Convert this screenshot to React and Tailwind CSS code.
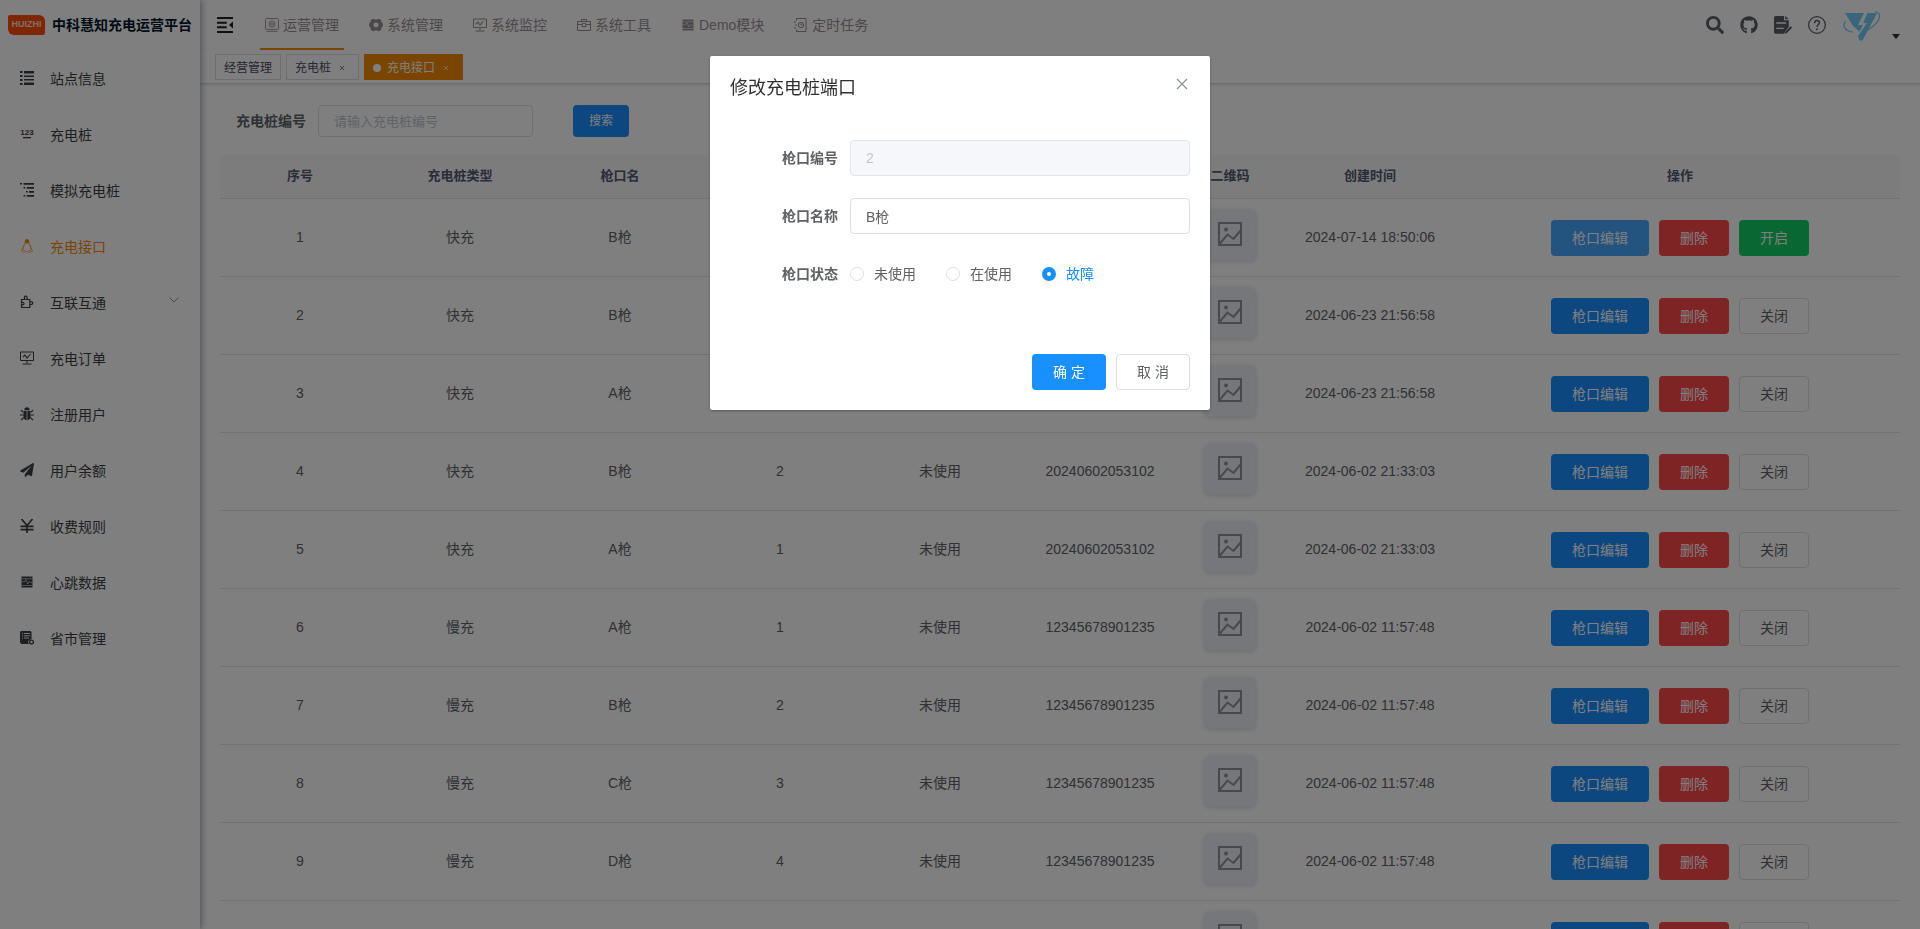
import { useState } from 'react'
import { FaSearch, FaGithub, FaPaperPlane } from 'react-icons/fa'

function Icon({ name, className }) {
  return (
    <svg viewBox="0 0 14 14" className={className} fill="currentColor" aria-hidden="true">
      {ICONS[name]}
    </svg>
  )
}

const line = { fill: 'none', stroke: 'currentColor' }

const ICONS = {
  list: (
    <path d="M0 0h2.5v2H0zM4 0h10v2.5H4zM0 4h2.5v2H0zM4 4.5h10v1.500H4zM0 8h2.5v2H0zM4 8h10v1.500H4zM0 12h2.5v2H0zM4 11.5h10V14H4z" />
  ),
  number: (
    <>
      <text x="7" y="7.500" textAnchor="middle" className="font-['Liberation_Sans'] text-[8px] font-bold">123</text>
      <path d="M3 10h8v1.300H3z" />
    </>
  ),
  tree: (
    <path d="M0 0h2v1.6H0zM3.5 0H14v1.8H3.5zM3.5 4h1.8v1.6H3.5zM6.8 4H14v1.8H6.8zM6 8h1.8v1.6H6zM9 8h5v1.8H9zM3.5 12h1.8v1.6H3.5zM6.8 12H14v1.8H6.8z" />
  ),
  penguin: (
    <g {...line} strokeWidth="1">
      <path d="M5.200 4.200C5 1.500 5.600.5 7 .5s2 1 1.800 3.700c.4 1.500 2.600 3.600 2.600 6.200M5.200 4.200C4.800 5.700 2.700 7.800 2.600 10.400" />
      <path fill="currentColor" d="M5.500 1.500C5.700.2 8.300.2 8.500 1.500V3.800H5.500z" />
      <path d="M2.600 10.200L1.200 12l3.200 1.500 1-1.300zM11.400 10.200L12.800 12l-3.200 1.500-1-1.300zM5.200 12.700h3.600" opacity="0.6" />
    </g>
  ),
  puzzle: (
    <path {...line} strokeWidth="1.200" d="M1.500 4.500H5C3.700 2.500 4.500 1.200 5.700 1.200S7.700 2.500 6.600 4.500h3.200v2.800c1.500-1 3-.5 3 .8s-1.500 1.800-3 .8v3.600H1.500V9.400c1.500.8 2.500.2 2.500-.8s-1-1.700-2.500-.9z" />
  ),
  monitor: (
    <g {...line}>
      <path d="M.5 1h13v8.500H.5zM7 9.500v3M2.500 13h9" />
      <path d="M3 6l2-2 2 3 3.500-4" strokeWidth="1.100" />
    </g>
  ),
  bug: (
    <>
      <path d="M4.300 3.200C4.300 1 5.500.3 7 .3s2.700.7 2.700 2.900zM3.800 4h2.800v9.300C4.500 13 3.400 11 3.400 8.500zM7.400 4h2.800l.4 4.500c0 2.500-1.100 4.500-3.200 4.800z" />
      <path {...line} strokeWidth="1.200" d="M.8 3.200l2.700 2M13.200 3.200l-2.700 2M0 8h3.500M14 8h-3.500M1 13.200l2.700-2.700M13 13.200l-2.700-2.700" />
    </>
  ),
  yen: (
    <path {...line} strokeWidth="1.700" d="M1.500 0L7 6.500 12.500 0M7 6.500V14M.5 7.300h13M.5 10.700h13" />
  ),
  pulse: (
    <>
      <path d="M1.500 1.500h11v11h-11z" />
      <path fill="none" className="stroke-white" strokeWidth="0.900" d="M1.500 6.800h3l1.500-2.300L7.700 9l1.600-2.600 1 1h2.200M1.500 3.700h11M1.500 10.500h11" opacity="0.600" />
    </>
  ),
  form: (
    <>
      <path d="M1 0h9.500l1 1v7.200a3 3 0 00-2.700 4.800H1.500L0 11.500V1z" />
      <path fill="none" className="stroke-white" strokeWidth="0.900" d="M2 2.500h1M4 2.500h6M2 4.800h1M4 4.800h6M2 7h1M4 7h5" />
      <circle {...line} strokeWidth="1.300" cx="11.500" cy="11" r="1.900" />
    </>
  ),
  dashboard: (
    <g {...line} strokeWidth="0.900">
      <rect x="0.500" y="0.500" width="13" height="11" rx="0.800" />
      <path d="M1.500 13.400h11M7 2.500l3 1.700v3.600L7 9.500 4 7.800V4.200z" />
      <circle cx="7" cy="6" r="1.400" />
    </g>
  ),
  gear: (
    <path
      fillRule="evenodd"
      d="M4.200.8l1.600.6h2.400L9.800.8l2.200 1.300.4 1.700L13.800 5.700v2.600l-1.400 1.900-.4 1.700-2.200 1.300-1.600-.6H5.800l-1.600.6L2 11.900l-.4-1.700L.2 8.300V5.700l1.400-1.900.4-1.700zM7 4.600a2.400 2.400 0 100 4.800 2.400 2.400 0 000-4.800z"
    />
  ),
  toolbox: (
    <path {...line} d="M.5 3.500h13v9H.5zM4.500 3.500v-2h5v2M.5 6.500h4.700M8.800 6.500h4.700M5.200 5.500h3.600v3H5.200z" />
  ),
  timer: (
    <g {...line}>
      <path d="M2.500.5h9.500v13H2.500M2.500.5v2M2.500 11.500v2" />
      <path d="M0 4h2M1 7h2M0 10h2" />
      <circle cx="7" cy="7" r="2.700" />
      <path d="M7 5.500V7h1.300" />
    </g>
  ),
  fold: (
    <path d="M0 0h14v1.800H0zM0 4.100h8.500v1.700H0zM0 8.200h8.500v1.700H0zM0 12.200h14V14H0zM14 4v6l-3.500-3z" />
  ),
  doc: (
    <>
      <path fillRule="evenodd" d="M1 0H7.800v3.400h3.700v5L7.600 13.900H1L0 13V1zM1.800 4.900v1.100h7.500V4.900zM1.800 9.100v1.100h5.500l.8-1.100z" />
      <path d="M8.700 0l2.800 2.600H8.700zM12.900 8l1.200 1-4.300 4.400-1.500.5.400-1.500z" />
    </>
  ),
  question: (
    <>
      <circle {...line} cx="7" cy="7" r="6.500" />
      <path {...line} strokeWidth="1.100" d="M5.100 5.600C5.100 4.200 5.900 3.500 7 3.500s1.900.7 1.900 1.800C8.900 6.600 7 6.800 7 8.600" />
      <circle cx="7" cy="10.300" r="0.700" />
    </>
  ),
}

const sideMenu = [
  { icon: 'list', label: '站点信息' },
  { icon: 'number', label: '充电桩' },
  { icon: 'tree', label: '模拟充电桩' },
  { icon: 'penguin', label: '充电接口', active: true },
  { icon: 'puzzle', label: '互联互通', children: true },
  { icon: 'monitor', label: '充电订单' },
  { icon: 'bug', label: '注册用户' },
  { icon: 'plane', label: '用户余额' },
  { icon: 'yen', label: '收费规则' },
  { icon: 'pulse', label: '心跳数据' },
  { icon: 'form', label: '省市管理' },
]

const topMenu = [
  { icon: 'dashboard', label: '运营管理', active: true },
  { icon: 'gear', label: '系统管理' },
  { icon: 'monitor', label: '系统监控' },
  { icon: 'toolbox', label: '系统工具' },
  { icon: 'pulse', label: 'Demo模块' },
  { icon: 'timer', label: '定时任务' },
]

const columns = ['序号', '充电桩类型', '枪口名', '枪口编号', '枪口状态', '充电桩编号', '二维码', '创建时间', '操作']

const rows = [
  { type: '快充', name: 'B枪', port: 2, status: '故障', code: '20240714065006', time: '2024-07-14 18:50:06', fault: true },
  { type: '快充', name: 'B枪', port: 2, status: '未使用', code: '20240623095658', time: '2024-06-23 21:56:58' },
  { type: '快充', name: 'A枪', port: 1, status: '未使用', code: '20240623095658', time: '2024-06-23 21:56:58' },
  { type: '快充', name: 'B枪', port: 2, status: '未使用', code: '20240602053102', time: '2024-06-02 21:33:03' },
  { type: '快充', name: 'A枪', port: 1, status: '未使用', code: '20240602053102', time: '2024-06-02 21:33:03' },
  { type: '慢充', name: 'A枪', port: 1, status: '未使用', code: '12345678901235', time: '2024-06-02 11:57:48' },
  { type: '慢充', name: 'B枪', port: 2, status: '未使用', code: '12345678901235', time: '2024-06-02 11:57:48' },
  { type: '慢充', name: 'C枪', port: 3, status: '未使用', code: '12345678901235', time: '2024-06-02 11:57:48' },
  { type: '慢充', name: 'D枪', port: 4, status: '未使用', code: '12345678901235', time: '2024-06-02 11:57:48' },
  { type: '慢充', name: 'E枪', port: 5, status: '未使用', code: '12345678901235', time: '2024-06-02 11:57:48' },
]

function Sidebar() {
  return (
    <aside className="relative z-10 w-[200px] shrink-0 bg-white shadow-[2px_0_6px_rgba(0,21,41,0.35)]">
      <a href="#home" className="flex h-[50px] items-center gap-[7px] pl-2 whitespace-nowrap">
        <span className="flex h-5 w-[37px] items-center justify-center rounded-tl-xs rounded-tr-md rounded-br-xs rounded-bl-md bg-[#ff4d0a] text-[9px] font-bold text-white/80">
          HUIZHI
        </span>
        <h1 className="text-sm font-bold text-[#001529]">中科慧知充电运营平台</h1>
      </a>
      <nav>
        {sideMenu.map(item => (
          <a
            key={item.label}
            href="#menu"
            className={`flex h-14 items-center gap-4 px-5 text-sm ${item.active ? 'text-[#f58a00]' : 'text-[#3c3e42]'}`}
          >
            {item.icon === 'plane'
              ? <FaPaperPlane className="size-3.5" />
              : <Icon name={item.icon} className="size-3.5" />}
            <span className="pt-0.5">{item.label}</span>
            {item.children && (
              <svg viewBox="0 0 12 12" className="mb-1 ml-auto size-3 text-[#909399]" {...line}>
                <path d="M1.500 3.500L6 8 10.500 3.500" />
              </svg>
            )}
          </a>
        ))}
      </nav>
    </aside>
  )
}

function Avatar() {
  return (
    <svg viewBox="0 0 40 40" className="size-10" aria-label="avatar">
      <path fill="#72cdf4" d="M3 8h19l-6 12h5l-3.500 6.500L11 21zM25.500 8H35L20.500 35.500h-3L16 31l9-13h-4z" />
      <path fill="none" stroke="#72cdf4" strokeWidth="1.200" d="M3.500 16C0 21 3 26.500 11 27M33 6.500c6.500 1 7.500 9-7 18.500" />
    </svg>
  )
}

function Navbar() {
  return (
    <header className="flex h-[50px] items-center justify-between bg-white pr-5 shadow-[0_1px_4px_rgba(0,21,41,0.08)]">
      <div className="flex h-full items-center">
        <button aria-label="收起菜单" className="px-[17px]">
          <Icon name="fold" className="size-4 text-[#202020]" />
        </button>
        <nav className="ml-2.5 flex h-full gap-5">
          {topMenu.map(item => (
            <a
              key={item.label}
              href="#top"
              className={`flex h-full items-center gap-1 border-b-2 px-[5px] pt-0.5 text-sm text-[#999093] ${item.active ? 'border-[#f58a00]' : 'border-transparent'}`}
            >
              <Icon name={item.icon} className="size-3.5" />
              {item.label}
            </a>
          ))}
        </nav>
      </div>
      <div className="flex items-center gap-4 text-lg text-[#5a5e66]">
        <FaSearch />
        <FaGithub />
        <Icon name="doc" className="size-[18px]" />
        <Icon name="question" className="size-[18px]" />
        <button aria-label="用户菜单" className="flex items-end gap-2.5">
          <Avatar />
          <svg viewBox="0 0 8 5" className="mb-1.5 h-[5px] w-2 fill-[#303133]">
            <path d="M0 0h8L4 5z" />
          </svg>
        </button>
      </div>
    </header>
  )
}

function Tag({ children, active, closable }) {
  return (
    <a
      href="#tag"
      className={`flex h-[26px] items-center gap-[3px] border px-2 pt-0.5 text-xs ${active ? 'border-[#f58a00] bg-[#f58a00] text-white' : 'border-[#d8dce5] bg-white text-[#495060]'}`}
    >
      {active && <span className="mr-[3px] size-2 rounded-full bg-white" />}
      {children}
      {closable && (
        <svg viewBox="0 0 16 16" className="size-4 opacity-70" {...line}>
          <path d="M6 6l4 4M10 6l-4 4" />
        </svg>
      )}
    </a>
  )
}

function DataTable() {
  return (
    <table className="w-full table-fixed text-center text-sm text-[#606266]">
      <colgroup>
        <col span={6} />
        <col className="w-[100px]" />
        <col className="w-[180px]" />
        <col className="w-[440px]" />
      </colgroup>
      <thead>
        <tr className="h-[43px] border-b border-[#dfe6ec] bg-[#f8f8f9] text-[13px] text-[#515a6e]">
          {columns.map(c => <th key={c} className="font-bold">{c}</th>)}
        </tr>
      </thead>
      <tbody>
        {rows.map((row, i) => (
          <tr key={i} className="h-[78px] border-b border-[#dfe6ec]">
            <td>{i + 1}</td>
            <td>{row.type}</td>
            <td>{row.name}</td>
            <td>{row.port}</td>
            <td>{row.status}</td>
            <td>{row.code}</td>
            <td className="pb-1">
              <div className="mx-auto flex size-[50px] items-center justify-center rounded-[5px] bg-[#ebeef5] text-[#909399] shadow-[0_1px_5px_1px_#ddd]">
                <svg viewBox="0 0 24 24" className="mb-0.5 size-6" {...line} strokeWidth="2">
                  <path d="M1 1h22v22H1zM1.500 22L9.500 12.500l6 4.500L22.500 8.500" />
                  <circle cx="8" cy="7.500" r="2" fill="currentColor" stroke="none" />
                </svg>
              </div>
            </td>
            <td>{row.time}</td>
            <td className="pt-0.5">
              <div className="flex justify-center gap-2.5 text-white">
                <button className={`h-9 w-[98px] rounded ${row.fault ? 'bg-[#46a6ff]' : 'bg-[#1890ff]'}`}>枪口编辑</button>
                <button className="h-9 w-[70px] rounded bg-[#ff4949]">删除</button>
                {row.fault
                  ? <button className="h-9 w-[70px] rounded bg-[#13ce66]">开启</button>
                  : <button className="h-9 w-[70px] rounded border border-[#dcdfe6] text-[#606266]">关闭</button>}
              </div>
            </td>
          </tr>
        ))}
      </tbody>
    </table>
  )
}

function EditDialog() {
  const [name, setName] = useState('B枪')
  const [status, setStatus] = useState('故障')

  return (
    <div className="fixed inset-0 z-20 bg-black/50">
      <div role="dialog" aria-labelledby="dialog-title" className="mx-auto mt-14 w-[500px] rounded-xs bg-white text-sm text-[#606266] shadow-[0_1px_3px_rgba(0,0,0,0.3)]">
        <div className="flex items-start justify-between px-5 pt-5 pb-2.5">
          <h2 id="dialog-title" className="text-lg leading-6 text-[#303133]">修改充电桩端口</h2>
          <button aria-label="关闭" className="text-[#909399]">
            <svg viewBox="0 0 16 16" className="size-4" {...line} strokeWidth="1.200">
              <path d="M3 3l10 10M13 3L3 13" />
            </svg>
          </button>
        </div>

        <form className="flex flex-col gap-[22px] px-5 pt-[30px] pb-[52px]">
          <div className="flex items-center">
            <label htmlFor="port-no" className="w-[120px] pr-3 text-right font-bold">枪口编号</label>
            <input id="port-no" disabled value="2" className="h-9 min-w-0 flex-1 rounded border border-[#dfe4ed] bg-[#f5f7fa] px-[15px] text-[#c0c4cc]" />
          </div>
          <div className="flex items-center">
            <label htmlFor="port-name" className="w-[120px] pr-3 text-right font-bold">枪口名称</label>
            <input id="port-name" value={name} onChange={e => setName(e.target.value)} className="h-9 min-w-0 flex-1 rounded border border-[#dcdfe6] px-[15px]" />
          </div>
          <div role="radiogroup" aria-labelledby="port-status" className="flex h-9 items-center">
            <span id="port-status" className="w-[120px] pr-3 text-right font-bold">枪口状态</span>
            <div className="flex gap-[30px]">
              {['未使用', '在使用', '故障'].map(s => (
                <label key={s} className={`flex items-center gap-2.5 ${s === status ? 'text-[#1890ff]' : ''}`}>
                  <input
                    type="radio"
                    name="status"
                    checked={s === status}
                    onChange={() => setStatus(s)}
                    className="size-3.5 appearance-none rounded-full border border-[#dcdfe6] bg-white checked:border-[5px] checked:border-[#1890ff]"
                  />
                  {s}
                </label>
              ))}
            </div>
          </div>
        </form>

        <div className="flex justify-end gap-2.5 px-5 pt-2.5 pb-5">
          <button className="h-9 w-[74px] rounded bg-[#1890ff] text-white">确 定</button>
          <button className="h-9 w-[74px] rounded border border-[#dcdfe6]">取 消</button>
        </div>
      </div>
    </div>
  )
}

export default function App() {
  return (
    <div className="flex h-screen overflow-hidden bg-white font-['Liberation_Sans','Noto_Sans_CJK_SC',sans-serif]">
      <Sidebar />
      <div className="min-w-0 flex-1">
        <Navbar />
        <div className="flex h-[34px] items-start gap-[5px] border-b border-[#d8dce5] bg-white px-[15px] pt-1 shadow-[0_1px_3px_rgba(0,0,0,0.12)]">
          <Tag>经营管理</Tag>
          <Tag closable>充电桩</Tag>
          <Tag closable active>充电接口</Tag>
        </div>

        <main className="px-5 pt-[21px]">
          <form className="mb-[18px] flex items-center text-[#606266]">
            <label htmlFor="pile-no" className="w-[98px] pr-3 text-right text-sm font-bold">充电桩编号</label>
            <input
              id="pile-no"
              placeholder="请输入充电桩编号"
              className="h-8 w-[215px] rounded border border-[#dcdfe6] px-[15px] text-[13px] placeholder:text-[#c0c4cc]"
            />
            <button type="button" className="ml-10 h-8 rounded bg-[#1890ff] px-4 text-xs text-white">搜索</button>
          </form>
          <DataTable />
        </main>
      </div>
      <EditDialog />
    </div>
  )
}
